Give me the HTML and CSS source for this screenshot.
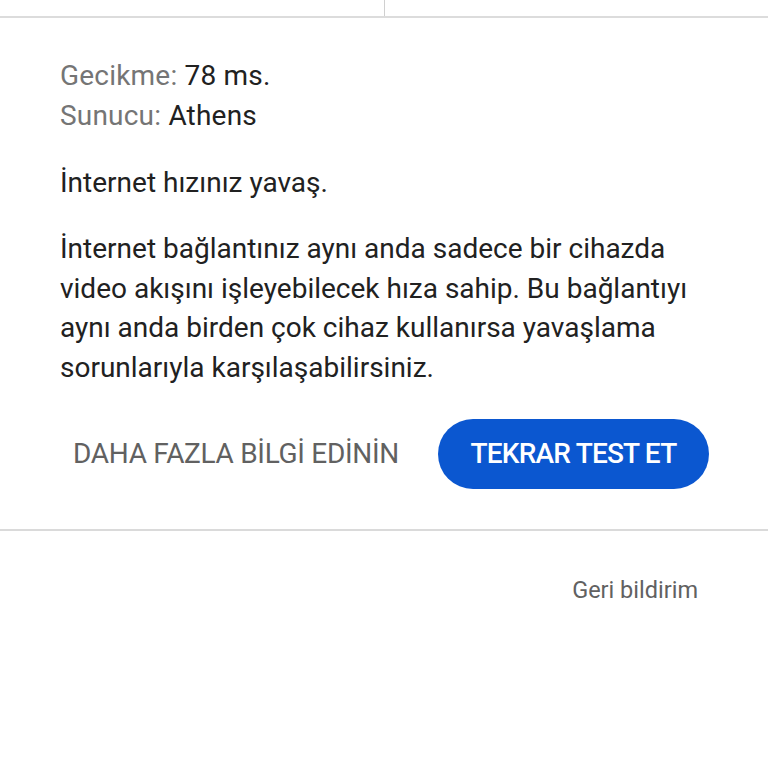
FILE: index.html
```html
<!DOCTYPE html>
<html lang="tr">
<head>
<meta charset="utf-8">
<link rel="stylesheet" href="styles.css">
</head>
<body>
<div class="top">
  <div class="top-cell"></div>
  <div class="top-cell"></div>
</div>
<div class="card">
  <div class="stats">
    <div class="stat"><span class="label">Gecikme:</span> <span class="value">78 ms.</span></div>
    <div class="stat"><span class="label">Sunucu:</span> <span class="value">Athens</span></div>
  </div>
  <p class="headline">İnternet hızınız yavaş.</p>
  <p class="desc">İnternet bağlantınız aynı anda sadece bir cihazda video akışını işleyebilecek hıza sahip. Bu bağlantıyı aynı anda birden çok cihaz kullanırsa yavaşlama sorunlarıyla karşılaşabilirsiniz.</p>
  <div class="actions">
    <button class="btn-text">DAHA FAZLA BİLGİ EDİNİN</button>
    <button class="btn-primary">TEKRAR TEST ET</button>
  </div>
</div>
<div class="footer">
  <a class="feedback">Geri bildirim</a>
</div>
</body>
</html>
```
FILE: styles.css
```css
html, body {
  margin: 0;
  padding: 0;
  background: #ffffff;
  font-family: Roboto, "Noto Sans", sans-serif;
}
.top {
  display: flex;
  height: 16px;
  border-bottom: 2px solid #dcdcdc;
}
.top-cell {
  flex: 1;
}
.top-cell:first-child {
  border-right: 1px solid #d0d0d0;
}
.card {
  padding: 38px 60px 40px 60px;
  border-bottom: 2px solid #dadada;
}
.stats {
  font-size: 28px;
  line-height: 40px;
  letter-spacing: 0.2px;
}
.label {
  color: #757575;
}
.value {
  color: #212121;
}
.headline {
  margin: 27px 0 0 0;
  font-size: 28px;
  line-height: 40px;
  color: #212121;
}
.desc {
  margin: 26px 0 0 0;
  font-size: 28px;
  line-height: 39.7px;
  color: #212121;
}
.actions {
  display: flex;
  align-items: center;
  justify-content: space-between;
  margin-top: 31px;
  padding-left: 13px;
}
.btn-text {
  border: none;
  background: none;
  padding: 0;
  font-family: Roboto, sans-serif;
  font-size: 28px;
  letter-spacing: -0.3px;
  color: #616161;
}
.btn-primary {
  border: none;
  background: #0b57d0;
  color: #ffffff;
  font-family: Roboto, sans-serif;
  font-weight: 500;
  font-size: 28px;
  letter-spacing: -0.8px;
  height: 70px;
  width: 271px;
  border-radius: 35px;
  margin-right: -1px;
}
.footer {
  display: flex;
  justify-content: flex-end;
  padding: 45px 70px 0 0;
}
.feedback {
  font-size: 23.5px;
  color: #616161;
}
```
